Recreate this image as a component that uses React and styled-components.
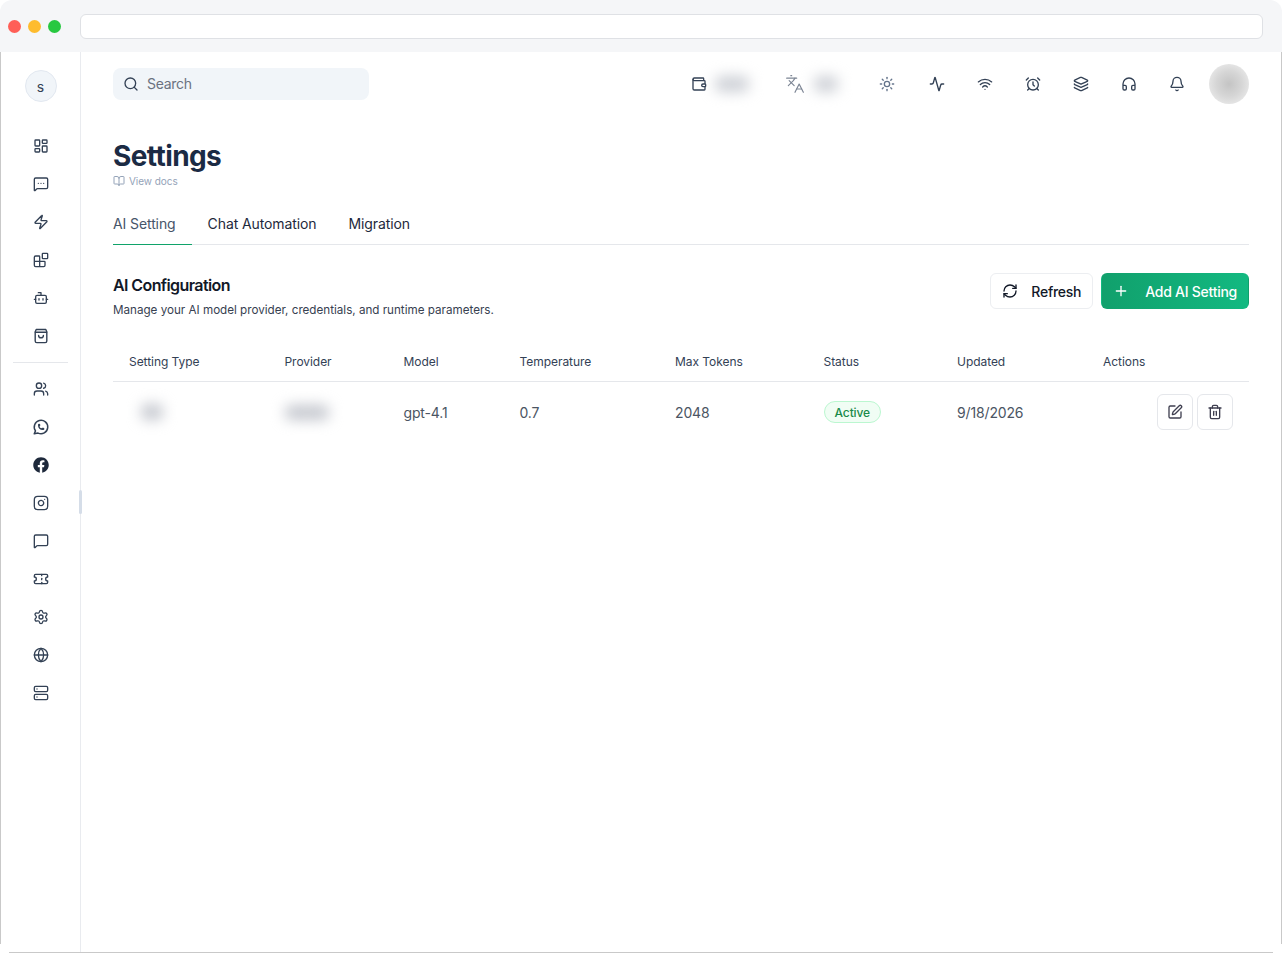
import React from 'react';
import styled, { createGlobalStyle } from 'styled-components';
import {
  Activity, AlarmClock, Bell, Blocks, BookOpen, Bot, Globe, Headphones, Instagram, Languages,
  LayoutDashboard, Layers, MessageSquare, MessageSquareMore, Plus, RefreshCw, Search, Server,
  Settings, SquarePen, Sun, Ticket, Trash2, Users, Wallet, Wifi, Zap,
} from 'lucide-react';
import { FaFacebook } from 'react-icons/fa';
import { TbBrandWhatsapp } from 'react-icons/tb';

const GlobalStyle = createGlobalStyle`
  * { box-sizing: border-box; }
  html, body { margin: 0; background: #fff; }
  body { font-family: Inter, "Liberation Sans", sans-serif; color: #1e293b; }
`;

const Frame = styled.div`
  position: relative;
  width: 1282px;
  height: 953px;
  overflow: hidden;
  background: #fff;
  &::before, &::after {
    content: "";
    position: absolute;
    top: 52px;
    bottom: 9px;
    width: 1px;
    background: #c9c9c9;
  }
  &::before { left: 0; }
  &::after { right: 0; }
`;

const TitleBar = styled.div`
  height: 52px;
  display: flex;
  align-items: center;
  padding: 0 19px 0 8px;
  background: #f5f6f8;
  border-radius: 12px 12px 0 0;
`;

const Dots = styled.div`
  display: flex;
  gap: 7px;
  width: 72px;
`;

const Dot = styled.span`
  width: 13px;
  height: 13px;
  border-radius: 50%;
  background: ${props => props.color};
`;

const AddressBar = styled.div`
  flex: 1;
  height: 25px;
  background: #fff;
  border: 1px solid #dfe1e5;
  border-radius: 6px;
`;

const Body = styled.div`
  height: 900px;
  display: flex;
`;

const Sidebar = styled.aside`
  position: relative;
  width: 81px;
  padding: 18px 0 0 1px;
  border-right: 1px solid #e9ebef;
  display: flex;
  flex-direction: column;
  align-items: center;
`;

const SideAvatar = styled.div`
  width: 32px;
  height: 32px;
  border-radius: 50%;
  background: #f1f5f9;
  border: 1px solid #e2e8f0;
  display: flex;
  align-items: center;
  justify-content: center;
  font-size: 14px;
  color: #334155;
  margin-bottom: 36px;
`;

const SideGroup = styled.nav`
  display: flex;
  flex-direction: column;
  gap: 22px;
  align-items: center;
  color: #334155;
  svg { display: block; }
`;

const SideDivider = styled.div`
  width: 55px;
  height: 1px;
  background: #e5e7eb;
  margin: 18px 0;
`;

const WhatsappIcon = styled(TbBrandWhatsapp)`
  margin: -1px;
`;

const ScrollThumb = styled.div`
  position: absolute;
  top: 438px;
  right: -2px;
  width: 3px;
  height: 24px;
  border-radius: 2px;
  background: #d5dde8;
`;

const Main = styled.main`
  flex: 1;
  padding: 12px 33px 0 32px;
`;

const TopBar = styled.header`
  height: 40px;
  display: flex;
  align-items: center;
  justify-content: space-between;
`;

const SearchBox = styled.div`
  width: 256px;
  height: 32px;
  display: flex;
  align-items: center;
  gap: 8px;
  padding: 0 10px 1px;
  background: #f1f5f9;
  border-radius: 8px;
  font-size: 14px;
  letter-spacing: -0.3px;
  color: #6b7280;
  svg { color: #334155; }
`;

const TopActions = styled.div`
  display: flex;
  align-items: center;
  color: #334155;
`;

const Slot = styled.div`
  width: ${props => props.w}px;
  display: flex;
  align-items: center;
  color: ${props => props.color || 'inherit'};
`;

const Blur = styled.span`
  display: block;
  flex: none;
  width: ${props => props.w}px;
  height: ${props => props.h}px;
  margin-left: ${props => props.ml || 0}px;
  border-radius: 6px;
  background: ${props => props.bg || '#cdd0d6'};
  filter: blur(7px);
`;

const TopAvatar = styled.div`
  width: 40px;
  height: 40px;
  border-radius: 50%;
  overflow: hidden;
  background: radial-gradient(circle, #c4c4c4 0%, #d6d6d6 45%, #ececec 85%);
`;

const PageTitle = styled.h1`
  margin: 32px 0 0;
  font-size: 28px;
  line-height: 40px;
  font-weight: 700;
  letter-spacing: -0.6px;
  color: #1b2b44;
`;

const DocsLink = styled.div`
  display: flex;
  align-items: center;
  gap: 4px;
  height: 12px;
  margin-top: -1px;
  font-size: 10px;
  letter-spacing: -0.05px;
  color: #94a3b8;
`;

const Tabs = styled.div`
  display: flex;
  margin-top: 17px;
  border-bottom: 1px solid #e5e7eb;
`;

const Tab = styled.div`
  height: 41px;
  margin-bottom: -1px;
  padding: 0 16px 2px;
  display: flex;
  align-items: center;
  font-size: 14px;
  letter-spacing: -0.1px;
  color: ${props => props.$active ? '#475569' : '#1e293b'};
  border-bottom: 1px solid ${props => props.$active ? '#10a36a' : 'transparent'};
  &:first-child { padding-left: 0; }
`;

const SectionHead = styled.div`
  display: flex;
  justify-content: space-between;
  align-items: flex-start;
  margin-top: 28px;
`;

const SectionTitle = styled.h2`
  margin: 0;
  font-size: 16px;
  line-height: 24px;
  font-weight: 600;
  letter-spacing: -0.6px;
  color: #111827;
`;

const SectionText = styled.p`
  margin: 5px 0 0;
  font-size: 11.65px;
  line-height: 16px;
  color: #374151;
`;

const Buttons = styled.div`
  display: flex;
  gap: 8px;
`;

const Button = styled.button`
  height: 36px;
  display: flex;
  align-items: center;
  gap: ${props => props.$primary ? 16 : 13}px;
  padding: 0 11px;
  border-radius: 6px;
  border: 1px solid ${props => props.$primary ? 'transparent' : '#eceef1'};
  background: ${props => props.$primary ? 'linear-gradient(90deg, #11a06c, #13b981)' : '#fff'};
  color: ${props => props.$primary ? '#fff' : '#111827'};
  font-family: inherit;
  font-size: 14px;
  font-weight: 500;
  letter-spacing: -0.26px;
`;

const Table = styled.table`
  width: 100%;
  margin-top: 24px;
  border-collapse: collapse;
  table-layout: fixed;
`;

const Col = styled.col`
  width: ${props => props.w}px;
`;

const Th = styled.th`
  height: 39px;
  padding: 0 0 0 16px;
  text-align: left;
  font-size: 12px;
  font-weight: 400;
  letter-spacing: -0.05px;
  color: #334155;
  border-bottom: 1px solid #e5e7eb;
`;

const Td = styled.td`
  height: 62px;
  padding: 0 0 0 16px;
  font-size: 14px;
  letter-spacing: -0.15px;
  color: #4b5563;
`;

const Chip = styled.span`
  display: inline-flex;
  align-items: center;
  height: 22px;
  padding: 0 10px;
  border-radius: 11px;
  border: 1px solid #bbf7d0;
  background: #f0fdf4;
  color: #1a8a4a;
  font-size: 12px;
  font-weight: 500;
  letter-spacing: -0.1px;
`;

const RowActions = styled.div`
  display: flex;
  justify-content: flex-end;
  gap: 4px;
  margin-right: 16px;
`;

const IconButton = styled.button`
  width: 36px;
  height: 36px;
  padding: 0;
  display: flex;
  align-items: center;
  justify-content: center;
  background: #fff;
  border: 1px solid #e5e7eb;
  border-radius: 6px;
  color: #3f3f50;
`;

const BottomLine = styled.div`
  height: 1px;
  margin: 0 9px;
  background: #c9c9c9;
`;

const BagIcon = () => (
  <svg width="16" height="16" viewBox="0 0 16 16" fill="none" stroke="currentColor" strokeWidth="1.4" strokeLinecap="round" strokeLinejoin="round">
    <path d="M3.2 1.5h9.6l1 2.2v9.3a1.6 1.6 0 0 1-1.6 1.6H3.8a1.6 1.6 0 0 1-1.6-1.6V3.7z" />
    <path d="M2.4 4.2h11.2" />
    <path d="M5.6 7.4a2.4 2.4 0 0 0 4.8 0" />
  </svg>
);

const mainNav = [
  <LayoutDashboard size={16} />, <MessageSquareMore size={16} />, <Zap size={16} />,
  <Blocks size={16} />, <Bot size={16} />, <BagIcon />,
];

const channelNav = [
  <Users size={16} />, <WhatsappIcon size={18} />, <FaFacebook size={16} color="#1e293b" />,
  <Instagram size={16} />, <MessageSquare size={16} />, <Ticket size={16} />,
  <Settings size={16} />, <Globe size={16} />, <Server size={16} />,
];

const statusIcons = [
  <Activity size={16} />, <Wifi size={16} />, <AlarmClock size={16} />, <Layers size={16} />,
  <Headphones size={16} />,
];

const columns = ['Setting Type', 'Provider', 'Model', 'Temperature', 'Max Tokens', 'Status', 'Updated', 'Actions'];
const widths = [155.5, 119, 116, 155.5, 148.5, 133.5, 146, 162];

const App = () => {
  return <Frame>
    <GlobalStyle />
    <TitleBar>
      <Dots>
        <Dot color="#ff5f57" />
        <Dot color="#febc2e" />
        <Dot color="#28c840" />
      </Dots>
      <AddressBar />
    </TitleBar>
    <Body>
      <Sidebar>
        <SideAvatar>s</SideAvatar>
        <SideGroup>{mainNav.map((icon, i) => <span key={i}>{icon}</span>)}</SideGroup>
        <SideDivider />
        <SideGroup>{channelNav.map((icon, i) => <span key={i}>{icon}</span>)}</SideGroup>
        <ScrollThumb />
      </Sidebar>
      <Main>
        <TopBar>
          <SearchBox><Search size={16} />Search</SearchBox>
          <TopActions>
            <Slot w={94}><Wallet size={16} /><Blur w={34} h={16} ml={8} /></Slot>
            <Slot w={94} color="#7c8594"><Languages size={20} strokeWidth={1.4} /><Blur w={24} h={16} ml={9} /></Slot>
            <Slot w={50} color="#64748b"><Sun size={16} /></Slot>
            {statusIcons.map((icon, i) => <Slot key={i} w={48}>{icon}</Slot>)}
            <Slot w={40}><Bell size={16} /></Slot>
            <TopAvatar />
          </TopActions>
        </TopBar>
        <PageTitle>Settings</PageTitle>
        <DocsLink><BookOpen size={12} />View docs</DocsLink>
        <Tabs>
          <Tab $active>AI Setting</Tab>
          <Tab>Chat Automation</Tab>
          <Tab>Migration</Tab>
        </Tabs>
        <SectionHead>
          <div>
            <SectionTitle>AI Configuration</SectionTitle>
            <SectionText>Manage your AI model provider, credentials, and runtime parameters.</SectionText>
          </div>
          <Buttons>
            <Button><RefreshCw size={16} />Refresh</Button>
            <Button $primary><Plus size={16} />Add AI Setting</Button>
          </Buttons>
        </SectionHead>
        <Table>
          <colgroup>{widths.map((w, i) => <Col key={i} w={w} />)}</colgroup>
          <thead>
            <tr>{columns.map(c => <Th key={c}>{c}</Th>)}</tr>
          </thead>
          <tbody>
            <tr>
              <Td><Blur w={22} h={16} ml={12} bg="#c4c7ce" /></Td>
              <Td><Blur w={44} h={15} bg="#c4c7ce" /></Td>
              <Td>gpt-4.1</Td>
              <Td>0.7</Td>
              <Td>2048</Td>
              <Td><Chip>Active</Chip></Td>
              <Td>9/18/2026</Td>
              <Td>
                <RowActions>
                  <IconButton><SquarePen size={16} /></IconButton>
                  <IconButton><Trash2 size={16} /></IconButton>
                </RowActions>
              </Td>
            </tr>
          </tbody>
        </Table>
      </Main>
    </Body>
    <BottomLine />
  </Frame>
}

export default App;
